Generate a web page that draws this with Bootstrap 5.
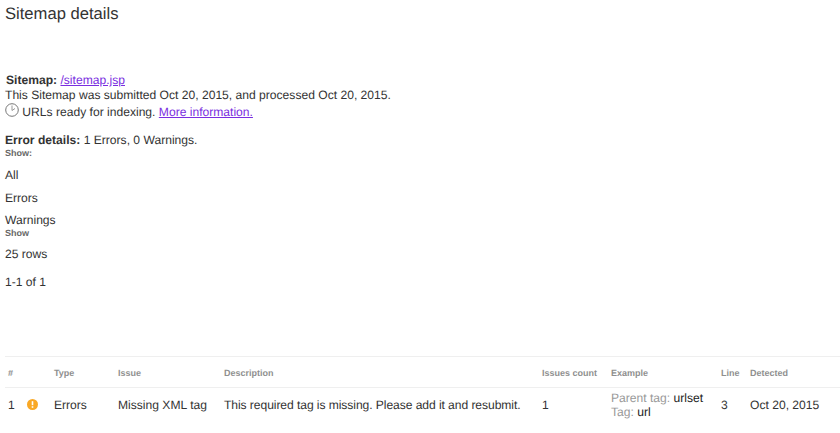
<!DOCTYPE html>
<html lang="en"><head><meta charset="utf-8"><title>Sitemap details</title>
<link href="https://cdn.jsdelivr.net/npm/bootstrap@5.3.0/dist/css/bootstrap.min.css" rel="stylesheet">
<style>
html,body{height:433px;overflow:hidden}
body{font-family:"Liberation Sans",Arial,sans-serif;font-size:12.1px;line-height:16px;color:#333;background:#fff;padding-left:5px;text-rendering:geometricPrecision}
h1.page-ttl{font-size:16.6px;line-height:20px;font-weight:400;color:#333;margin:4px 0 48px}
a.vis{color:#7a2ee0}
.meta-line{height:16px}
.meta-first{padding-left:1px;height:15px}
.meta-clock{height:17px}
.err-head{margin-top:12px}
.tiny{font-size:9px;line-height:10px;font-weight:700;color:#666;height:11px}
.opt{height:22.5px;line-height:22.5px;color:#333}
.opt-first{margin-top:5px}
.opt-rows{margin-top:4px}
.opt-last{height:18.5px;line-height:22.5px}
.clock{vertical-align:-1px;margin-right:0}
.pager{margin-top:9px;height:16px}
.sm-table{width:835px;table-layout:fixed;border-collapse:collapse;margin-top:66px;border-top:1px solid #efefef}
.sm-table th{font-size:9px;font-weight:700;color:#8f8f8f;padding:2px 0 0 3px;height:31px;border-bottom:1px solid #efefef;vertical-align:middle;white-space:nowrap}
.sm-table td{padding:0 0 0 3px;height:34px;vertical-align:middle;color:#333;white-space:nowrap;line-height:14px}
.sm-table td.desc-cell{letter-spacing:-.07px}
.mute{color:#999}
.ink{color:#222}
.warn-ic{display:block}
</style></head>
<body>
<h1 class="page-ttl">Sitemap details</h1>
<div class="meta-line meta-first"><b>Sitemap:</b> <a class="vis" href="#">/sitemap.jsp</a></div>
<div class="meta-line">This Sitemap was submitted Oct 20, 2015, and processed Oct 20, 2015.</div>
<div class="meta-line meta-clock"><svg class="clock" width="14" height="14" viewBox="0 0 14 14" fill="none" stroke="#777"><circle cx="7" cy="7" r="6.3"/><path d="M7 2.5V7.5L10 5.5" stroke="#999"/></svg> URLs ready for indexing. <a class="vis" href="#">More information.</a></div>
<div class="meta-line err-head"><b>Error details:</b> 1 Errors, 0 Warnings.</div>
<div class="tiny">Show:</div>
<div class="opt opt-first">All</div>
<div class="opt">Errors</div>
<div class="opt opt-last">Warnings</div>
<div class="tiny">Show</div>
<div class="opt opt-rows">25 rows</div>
<div class="pager">1-1 of 1</div>
<table class="sm-table">
<colgroup><col style="width:19px"><col style="width:27px"><col style="width:64px"><col style="width:106px"><col style="width:318px"><col style="width:69px"><col style="width:110px"><col style="width:29px"><col></colgroup>
<thead><tr><th>#</th><th></th><th>Type</th><th>Issue</th><th>Description</th><th>Issues count</th><th>Example</th><th>Line</th><th>Detected</th></tr></thead>
<tbody><tr><td>1</td><td><svg class="warn-ic" width="11" height="11" viewBox="0 0 11 11"><circle cx="5.5" cy="5.5" r="5.5" fill="#f9a825"/><rect x="4.7" y="2.2" width="1.6" height="4" fill="#fff"/><rect x="4.7" y="7.2" width="1.6" height="1.6" fill="#fff"/></svg></td><td>Errors</td><td>Missing XML tag</td><td class="desc-cell">This required tag is missing. Please add it and resubmit.</td><td>1</td><td><span class="mute">Parent tag:</span> <span class="ink">urlset</span><br><span class="mute">Tag:</span> <span class="ink">url</span></td><td>3</td><td>Oct 20, 2015</td></tr></tbody>
</table>
<script src="https://cdn.jsdelivr.net/npm/bootstrap@5.3.0/dist/js/bootstrap.bundle.min.js"></script>
</body></html>
